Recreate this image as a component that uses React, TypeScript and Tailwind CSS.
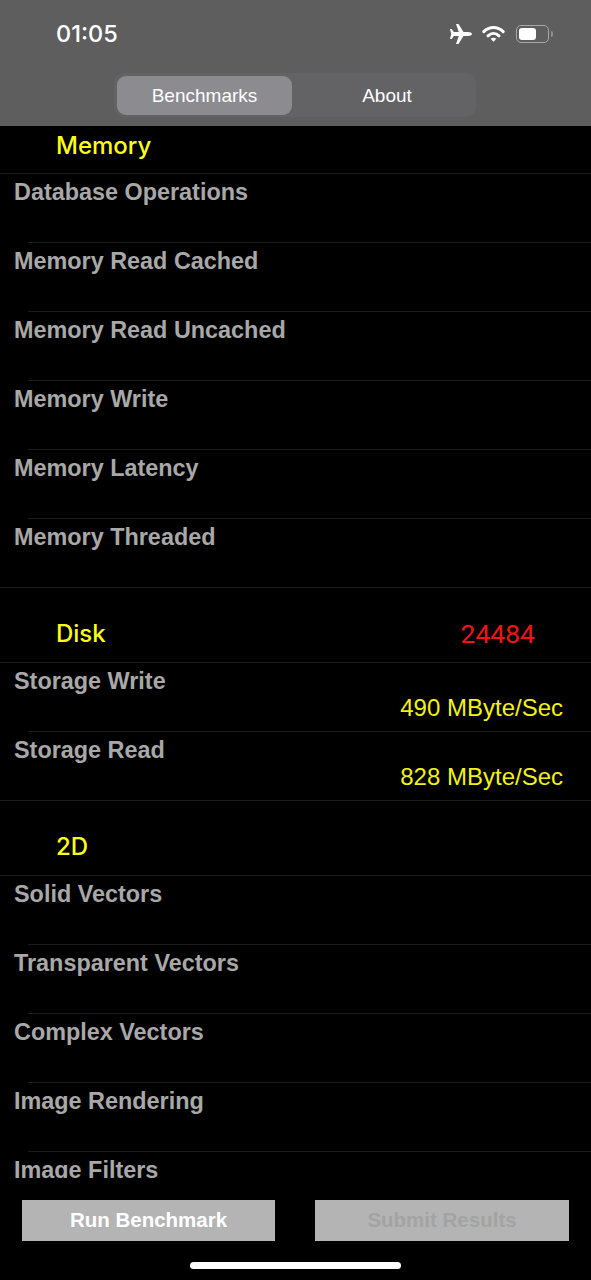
import React from "react";

type Row = { name: string; value?: string };

const sections: { title: string; score?: string; tall: boolean; rows: Row[] }[] = [
  {
    title: "Memory",
    tall: false,
    rows: [
      { name: "Database Operations" },
      { name: "Memory Read Cached" },
      { name: "Memory Read Uncached" },
      { name: "Memory Write" },
      { name: "Memory Latency" },
      { name: "Memory Threaded" },
    ],
  },
  {
    title: "Disk",
    score: "24484",
    tall: true,
    rows: [
      { name: "Storage Write", value: "490 MByte/Sec" },
      { name: "Storage Read", value: "828 MByte/Sec" },
    ],
  },
  {
    title: "2D",
    tall: true,
    rows: [
      { name: "Solid Vectors" },
      { name: "Transparent Vectors" },
      { name: "Complex Vectors" },
      { name: "Image Rendering" },
      { name: "Image Filters" },
    ],
  },
];

function StatusIcons() {
  return (
    <div className="flex items-center">
      <svg width="22" height="20" viewBox="0 0 22 20" fill="white">
        <path d="M22 10C22 8.9 20 8 18 8L13.5 8L8.5 0L6 0L8.8 8L3.8 8L1.8 5L0 5L1.2 10L0 15L1.8 15L3.8 12L8.8 12L6 20L8.5 20L13.5 12L18 12C20 12 22 11.1 22 10Z" />
      </svg>
      <svg className="ml-[10px]" width="23" height="18" viewBox="0 0 23 18" fill="none">
        <path d="M1.8 6.6C7.5 1 15.5 1 21.2 6.6" stroke="white" strokeWidth="3" strokeLinecap="round" />
        <path d="M6 10.8C9.3 7.8 13.7 7.8 17 10.8" stroke="white" strokeWidth="3" strokeLinecap="round" />
        <path d="M8.6 13.8L11.5 16.8L14.4 13.8C12.6 12.4 10.4 12.4 8.6 13.8Z" fill="white" />
      </svg>
      <div className="ml-[11px] flex items-center gap-[2px]">
        <div className="w-[33px] h-[18px] rounded-[5px] border border-[#a8a8a8] py-[2px] pl-[2px]">
          <div className="w-[17px] h-full rounded-[3px] bg-white" />
        </div>
        <div className="w-[2px] h-[6px] rounded-r-full bg-[#8f8f8f]" />
      </div>
    </div>
  );
}

function Section({ title, score, tall, rows }: (typeof sections)[number]) {
  return (
    <div>
      <div
        className={`flex items-center justify-between px-[56px] border-b border-[#1c1c1c] ${
          tall ? "h-[75px] pt-[18px]" : "h-[48px] pb-[8px]"
        }`}
      >
        <span className="text-[#ffff14] text-[24px] leading-[30px] font-['Inter',sans-serif] font-medium">{title}</span>
        {score && <span className="text-[#f01414] text-[26.5px] leading-[30px] font-['Roboto',sans-serif]">{score}</span>}
      </div>
      {rows.map((row, i) => (
        <div key={row.name}>
          <div className="h-[68px] px-[14px]">
            <div className="font-bold text-[#a8a8a8] text-[23.4px] leading-[27px] pt-[5px]">{row.name}</div>
            {row.value && (
              <div className="text-right text-[#f2f214] text-[24px] leading-[28px] pr-[14px] mt-[-1px]">{row.value}</div>
            )}
          </div>
          <div className={`h-px bg-[#1c1c1c] ${i === rows.length - 1 ? "" : "ml-[28px]"}`} />
        </div>
      ))}
    </div>
  );
}

export default function App() {
  return (
    <div className="w-[591px] h-[1280px] bg-black flex flex-col overflow-hidden font-['Liberation_Sans',sans-serif]">
      <div className="h-[126px] shrink-0 bg-[#5e5e5e] flex flex-col">
        <div className="h-[73px] flex items-center justify-between pl-[56px] pr-[38px] pb-[6px]">
          <span className="text-white text-[23.5px] font-['Inter',sans-serif] font-medium">01:05</span>
          <StatusIcons />
        </div>
        <div className="flex justify-center">
          <div className="ml-[-1px] w-[362px] h-[44px] rounded-[10px] bg-[#636365] pl-[3px] pt-[3px] flex">
            <div className="w-[175px] h-[39px] pt-[1px] rounded-[9px] bg-[#8b8b90] text-white text-[19px] flex items-center justify-center">
              Benchmarks
            </div>
            <div className="flex-1 h-[39px] pt-[1px] pl-[6px] text-white text-[19px] flex items-center justify-center">About</div>
          </div>
        </div>
      </div>
      <div className="h-[1052px] shrink-0 overflow-hidden">
        {sections.map((s) => (
          <Section key={s.title} {...s} />
        ))}
      </div>
      <div className="flex justify-between px-[22px] pt-[22px]">
        <div className="w-[253px] h-[41px] bg-[#b4b4b4] text-white font-bold text-[20.5px] flex items-center justify-center">
          Run Benchmark
        </div>
        <div className="w-[254px] h-[41px] bg-[#b4b4b4] text-[#a3a3a3] font-bold text-[20.5px] flex items-center justify-center">
          Submit Results
        </div>
      </div>
      <div className="mt-[21px] mx-auto w-[211px] h-[7px] rounded-full bg-white" />
    </div>
  );
}
